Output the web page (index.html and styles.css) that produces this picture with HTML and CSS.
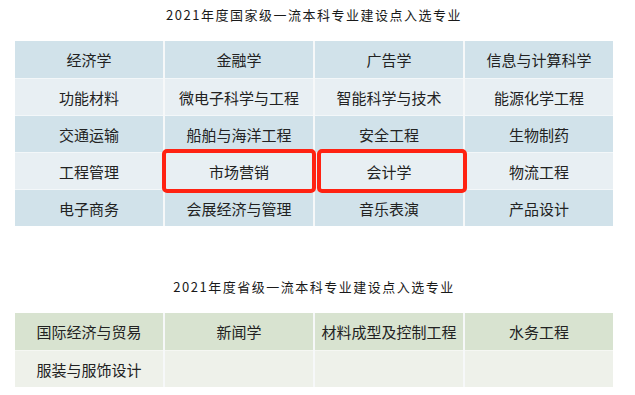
FILE: index.html
```html
<!DOCTYPE html>
<html lang="zh-CN">
<head>
<meta charset="utf-8">
<link rel="stylesheet" href="styles.css">
</head>
<body>
<div class="page">
  <section class="block">
    <h2 class="title">2021年度国家级一流本科专业建设点入选专业</h2>
    <div class="grid blue">
      <div class="cell">经济学</div>
      <div class="cell">金融学</div>
      <div class="cell">广告学</div>
      <div class="cell">信息与计算科学</div>
      <div class="cell">功能材料</div>
      <div class="cell">微电子科学与工程</div>
      <div class="cell">智能科学与技术</div>
      <div class="cell">能源化学工程</div>
      <div class="cell">交通运输</div>
      <div class="cell">船舶与海洋工程</div>
      <div class="cell">安全工程</div>
      <div class="cell">生物制药</div>
      <div class="cell">工程管理</div>
      <div class="cell">市场营销<span class="mark mark-a"></span></div>
      <div class="cell">会计学<span class="mark mark-b"></span></div>
      <div class="cell">物流工程</div>
      <div class="cell">电子商务</div>
      <div class="cell">会展经济与管理</div>
      <div class="cell">音乐表演</div>
      <div class="cell">产品设计</div>
    </div>
  </section>
  <section class="block second">
    <h2 class="title">2021年度省级一流本科专业建设点入选专业</h2>
    <div class="grid green">
      <div class="cell">国际经济与贸易</div>
      <div class="cell">新闻学</div>
      <div class="cell">材料成型及控制工程</div>
      <div class="cell">水务工程</div>
      <div class="cell">服装与服饰设计</div>
      <div class="cell"></div>
      <div class="cell"></div>
      <div class="cell"></div>
    </div>
  </section>
</div>
</body>
</html>
```

FILE: styles.css
```css
html, body {
  margin: 0;
  padding: 0;
  background: #ffffff;
}
.page {
  width: 598px;
  padding: 0 0 0 15px;
  font-family: "Noto Sans CJK SC", "Noto Sans", sans-serif;
}
.block {
  display: flex;
  flex-direction: column;
}
.title {
  margin: 0 0 11px 0;
  height: 30px;
  padding-top: 5px;
  box-sizing: border-box;
  text-align: center;
  font-size: 13px;
  font-weight: 400;
  line-height: 20px;
  letter-spacing: 1.5px;
  color: #1a1a1a;
}
.second {
  margin-top: 46px;
}
.grid {
  display: grid;
  grid-template-columns: repeat(4, 1fr);
  column-gap: 2px;
  row-gap: 0;
  background: #f6f8f9;
}
.cell {
  position: relative;
  box-sizing: border-box;
  height: 37px;
  display: flex;
  align-items: center;
  justify-content: center;
  font-size: 15px;
  color: #222222;
  white-space: nowrap;
}
.blue .cell:nth-child(8n+1),
.blue .cell:nth-child(8n+2),
.blue .cell:nth-child(8n+3),
.blue .cell:nth-child(8n+4) {
  background: #d1e2ea;
}
.blue .cell:nth-child(8n+5),
.blue .cell:nth-child(8n+6),
.blue .cell:nth-child(8n+7),
.blue .cell:nth-child(8n+8) {
  background: #e8eff3;
}
.blue .cell:nth-child(n+5) {
  border-top: 1px solid #f3f7f9;
}
.green .cell:nth-child(-n+4) {
  background: #d8e3d0;
}
.green .cell:nth-child(n+5) {
  background: #eef1ea;
  border-top: 1px solid #f5f7f3;
}
.mark {
  position: absolute;
  z-index: 2;
  top: -4px;
  bottom: -4px;
  border: 4px solid #ff2212;
  border-radius: 5px;
  pointer-events: none;
}
.mark-a {
  left: -3px;
  right: -3px;
}
.mark-b {
  left: 2px;
  right: -4px;
}
```
